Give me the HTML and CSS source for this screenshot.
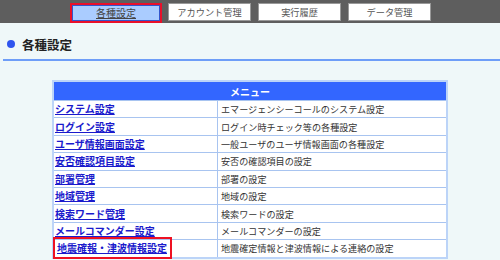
FILE: index.html
```html
<!DOCTYPE html>
<html lang="ja">
<head>
  <meta charset="UTF-8" />
  <title>各種設定</title>
  <link rel="stylesheet" href="styles.css">
</head>
<body>

  <div class="topbar">
    <a class="tab active" href="#">各種設定</a>
    <a class="tab" href="#">アカウント管理</a>
    <a class="tab" href="#">実行履歴</a>
    <a class="tab" href="#">データ管理</a>
  </div>

  <h2 class="page-title"><span class="dot"></span>各種設定</h2>

  <table class="menu">
    <thead>
      <tr><th colspan="2">メニュー</th></tr>
    </thead>
    <tbody>
      <tr><td class="name"><a href="#">システム設定</a></td><td>エマージェンシーコールのシステム設定</td></tr>
      <tr><td class="name"><a href="#">ログイン設定</a></td><td>ログイン時チェック等の各種設定</td></tr>
      <tr><td class="name"><a href="#">ユーザ情報画面設定</a></td><td>一般ユーザのユーザ情報画面の各種設定</td></tr>
      <tr><td class="name"><a href="#">安否確認項目設定</a></td><td>安否の確認項目の設定</td></tr>
      <tr><td class="name"><a href="#">部署管理</a></td><td>部署の設定</td></tr>
      <tr><td class="name"><a href="#">地域管理</a></td><td>地域の設定</td></tr>
      <tr><td class="name"><a href="#">検索ワード管理</a></td><td>検索ワードの設定</td></tr>
      <tr><td class="name"><a href="#">メールコマンダー設定</a></td><td>メールコマンダーの設定</td></tr>
      <tr><td class="name"><a class="marked" href="#">地震確報・津波情報設定</a></td><td>地震確定情報と津波情報による連絡の設定</td></tr>
    </tbody>
  </table>

</body>
</html>
```

FILE: styles.css
```css
body {
  margin: 0;
  background: #eff8f9;
  font-family: "Noto Sans CJK JP", "Noto Sans", sans-serif;
  color: #333;
}

/* タブのバー */
.topbar {
  height: 23px;
  background: #5e5e5e;
  display: flex;
  align-items: flex-start;
  gap: 7px;
  padding-left: 70px;
  box-sizing: border-box;
  padding-top: 3px;
}
.tab {
  width: 83px;
  height: 18px;
  box-sizing: border-box;
  background: #fff;
  border: 1px solid #999;
  color: #555;
  font-size: 9.2px;
  line-height: 16px;
  text-align: center;
  text-decoration: none;
}
.tab.active {
  width: 92px;
  height: 20px;
  background: #aaccff;
  border: 2px solid #e8102a;
  box-shadow: inset 0 0 0 1px #3355cc;
  text-decoration: underline;
  color: #444;
  font-size: 10px;
  margin-right: -1px;
}

.page-title {
  margin: 0;
  height: 38px;
  padding: 0 0 0 4px;
  display: flex;
  align-items: center;
  gap: 7px;
  font-size: 12.5px;
  font-weight: bold;
  color: #222;
  border-bottom: 2px solid #6e9ef8;
  margin-left: 3px;
  box-sizing: border-box;
  padding-top: 6px;
}
.dot {
  width: 8px;
  height: 8px;
  border-radius: 50%;
  background: #2f55ee;
}

table.menu {
  margin: 19px auto 0 auto;
  width: 396px;
  border-collapse: collapse;
  border: 2px solid #bcd4f8;
  background: #fff;
  font-size: 9.1px;
}
.menu th {
  height: 18px;
  padding: 0;
  background: #3366ff;
  color: #fff;
  font-weight: bold;
  font-size: 10px;
  border: 1px solid #a8c4f0;
}
.menu td {
  height: 16.4px;
  padding: 0 3px;
  border: 1px solid #a8c4f0;
  white-space: nowrap;
  color: #333;
  line-height: 14px;
}
.menu td.name {
  width: 159px;
  padding-left: 1px;
}
.menu a {
  color: #1a1acc;
  font-weight: bold;
  font-size: 10px;
}
.menu a.marked {
  display: inline-block;
  margin: -3px 0 -3px -2px;
  padding: 2px 3px 2px 2px;
  border: 2px solid #ee1122;
}
```
